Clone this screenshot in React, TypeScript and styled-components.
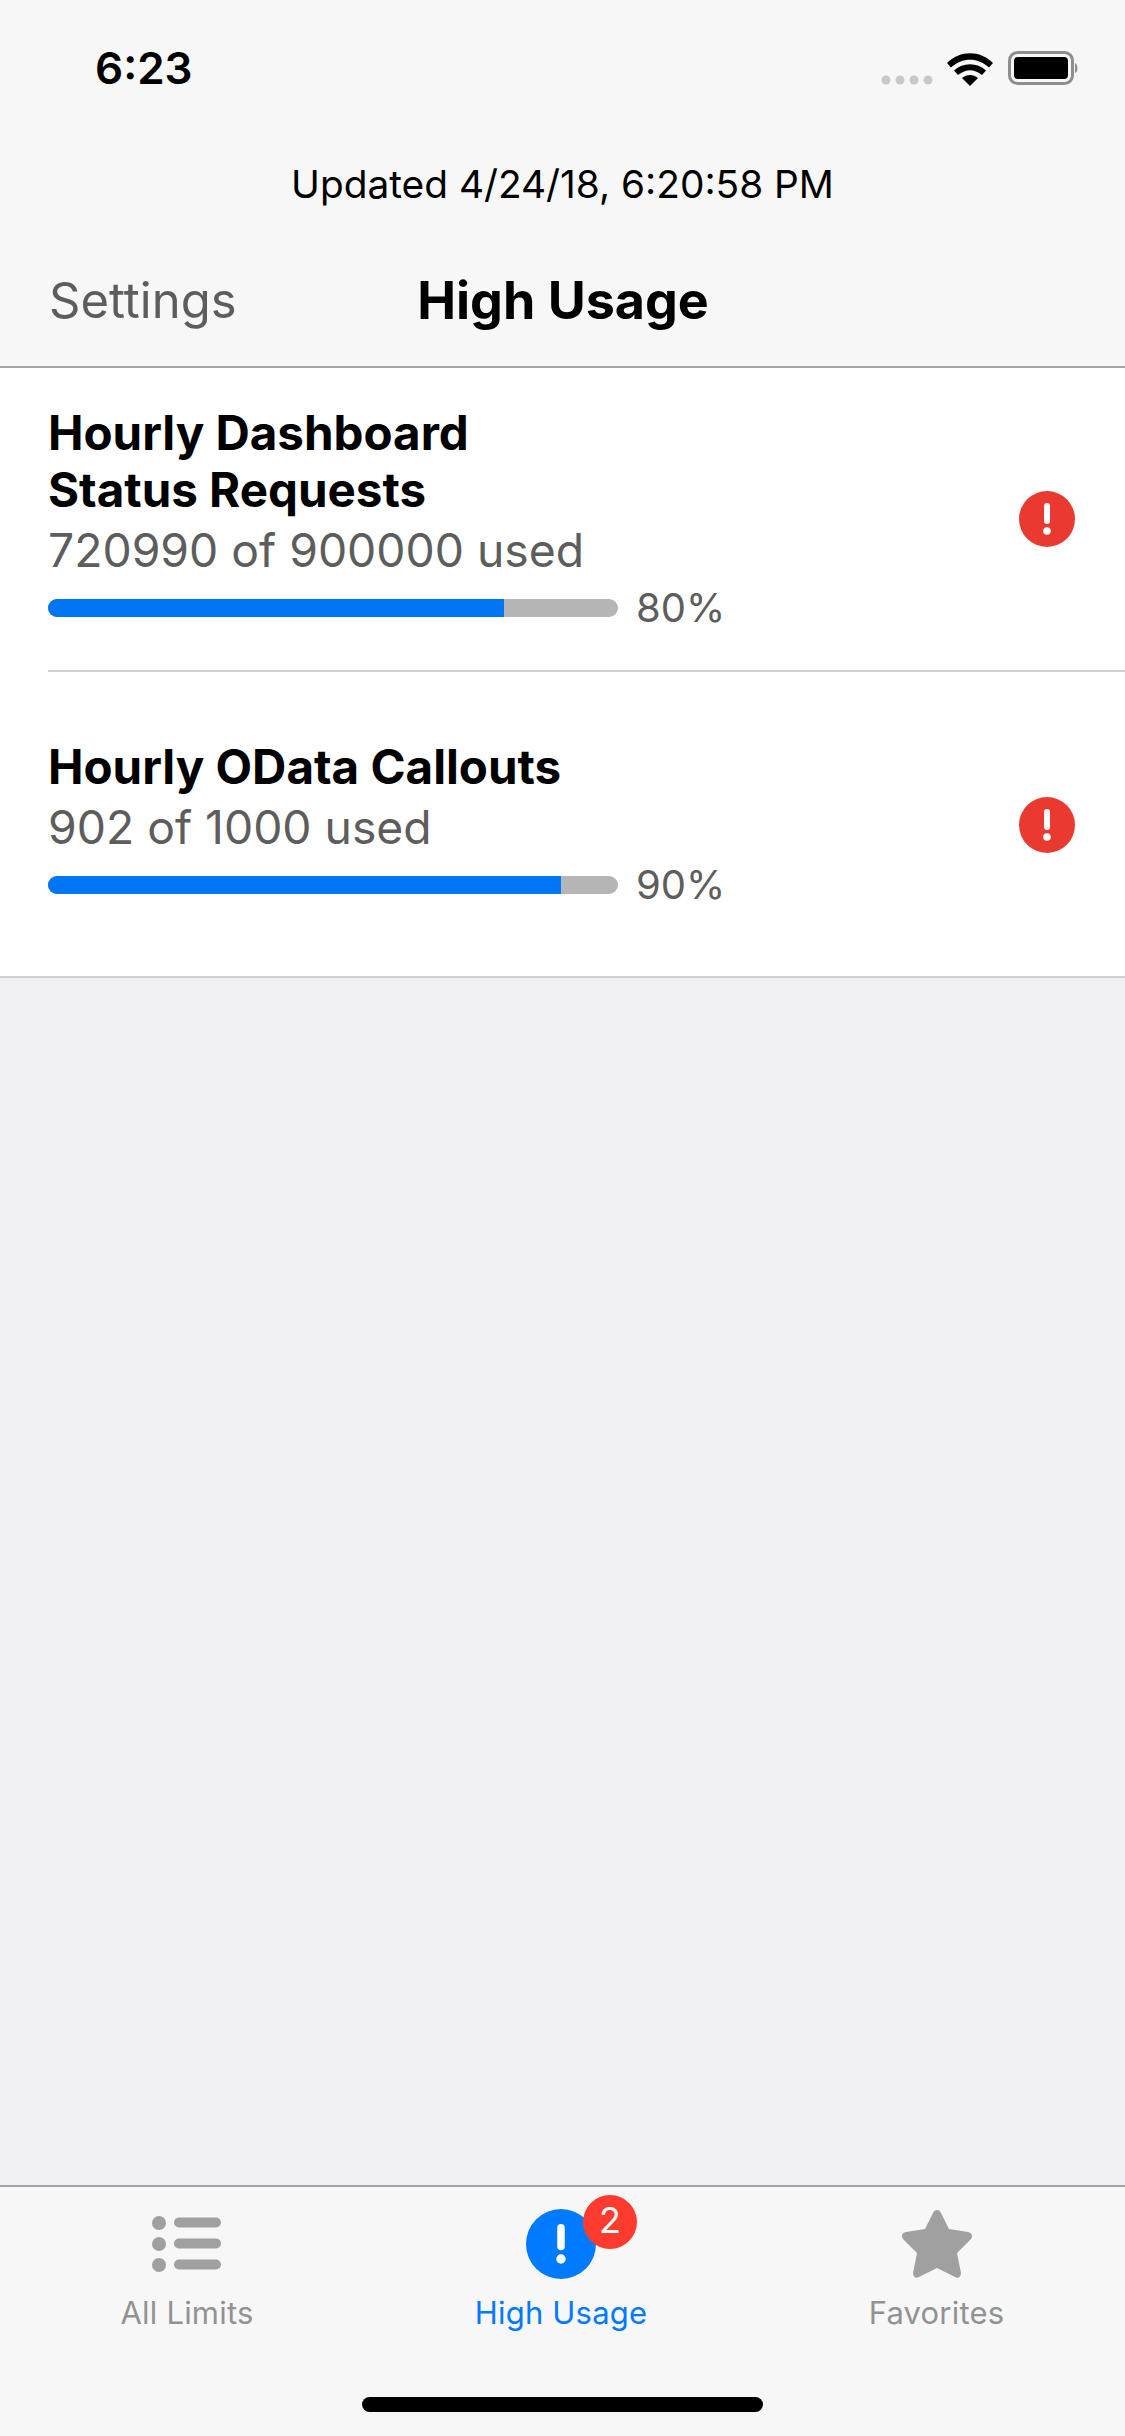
import styled, { createGlobalStyle } from "styled-components"

const GlobalStyle = createGlobalStyle`
    html, body {
        margin: 0;
        padding: 0;
        background: #efeff4;
    }
    * {
        box-sizing: border-box;
    }
`

const Page = styled.div`
    width: 1125px;
    height: 2436px;
    display: flex;
    flex-direction: column;
    font-family: Inter, "Liberation Sans", sans-serif;
    overflow: hidden;
`

const Header = styled.header`
    height: 368px;
    flex: none;
    display: flex;
    flex-direction: column;
    background: #f7f7f7;
    border-bottom: 2px solid #a4a4a6;
`

const StatusBar = styled.div`
    height: 143px;
    padding: 44px 44px 0 95px;
    display: flex;
    justify-content: space-between;
    align-items: flex-start;
`

const Clock = styled.span`
    font-size: 44px;
    line-height: 48px;
    font-weight: 600;
    color: #000;
`

const StatusIcons = styled.div`
    display: flex;
    align-items: flex-start;
    margin-top: 7px;
`

const Updated = styled.div`
    height: 82px;
    text-align: center;
    font-size: 38.800px;
    line-height: 82px;
    color: #000;
    font-weight: 400;
`

const Nav = styled.nav`
    flex: 1;
    display: grid;
    grid-template-columns: 1fr auto 1fr;
    align-items: center;
    padding: 10px 0 0 49px;
`

const BackLink = styled.span`
    font-size: 49px;
    line-height: 56px;
    color: #5d5d5d;
`

const NavTitle = styled.h1`
    margin: 0 24px 0 -24px;
    font-size: 52px;
    line-height: 56px;
    font-weight: 700;
    color: #000;
`

const List = styled.section`
    flex: none;
    background: #fff;
    border-bottom: 2px solid #d0d0d2;
`

const Row = styled.div<{ $height: number; $offset: number }>`
    height: ${props => props.$height}px;
    display: flex;
    align-items: center;
    justify-content: space-between;
    padding: ${props => props.$offset}px 50px 0 48px;
`

const Divider = styled.div`
    height: 2px;
    margin-left: 48px;
    background: #d0d0d2;
`

const RowBody = styled.div`
    display: flex;
    flex-direction: column;
`

const RowTitle = styled.div`
    font-size: 47.500px;
    line-height: 57px;
    font-weight: 700;
    color: #000;
`

const RowUsage = styled.div`
    font-size: 46.300px;
    line-height: 60px;
    margin-top: 2px;
    color: #5d5d5d;
`

const BarRow = styled.div`
    display: flex;
    align-items: center;
    gap: 18px;
    height: 54px;
    margin-top: 1px;
`

const Track = styled.div`
    width: 570px;
    height: 18px;
    border-radius: 9px;
    background: #b5b5b5;
    overflow: hidden;
`

const Fill = styled.div`
    height: 100%;
    background: #0076f5;
`

const Percent = styled.span`
    font-size: 40px;
    line-height: 54px;
    color: #5d5d5d;
`

const Spacer = styled.div`
    flex: 1;
    background: #efeff4;
`

const TabBar = styled.footer`
    height: 251px;
    flex: none;
    background: #f7f7f7;
    border-top: 2px solid #a4a4a6;
    display: flex;
    flex-direction: column;
`

const Tabs = styled.div`
    display: grid;
    grid-template-columns: 374px 374px 377px;
    padding-top: 21px;
`

const Tab = styled.div<{ $active?: boolean }>`
    display: flex;
    flex-direction: column;
    align-items: center;
    color: ${props => props.$active ? "#007aff" : "#929292"};
`

const TabIcon = styled.div`
    position: relative;
    width: 72px;
    height: 72px;
    display: flex;
    align-items: center;
    justify-content: center;
`

const TabLabel = styled.span`
    margin-top: 15px;
    font-size: 31px;
    line-height: 36px;
    letter-spacing: 0.200px;
    font-weight: 400;
`

const Badge = styled.span`
    position: absolute;
    left: 58px;
    top: -13px;
    width: 54px;
    height: 54px;
    border-radius: 50%;
    background: #ff3b30;
    color: #fff;
    font-size: 36px;
    line-height: 50px;
    text-align: center;
`

const HomeIndicator = styled.div`
    width: 401px;
    height: 15px;
    margin: 66px auto 0;
    border-radius: 8px;
    background: #000;
`

const SignalWifiBattery = () => (
    <svg width="200" height="36" viewBox="0 0 200 36">
        <g fill="#c8c8c8">
            <circle cx="5" cy="29" r="4.5" />
            <circle cx="19" cy="29" r="4.5" />
            <circle cx="33" cy="29" r="4.5" />
            <circle cx="47" cy="29" r="4.5" />
        </g>
        <path
            d="M66 12 C79 -1 99 -1 112 12 L108 16.500 C97 6 81 6 70 16.500 Z M73 19.500 C82 11 96 11 105 19.500 L101 24 C93 17.500 85 17.500 77 24 Z M81 27 C86 23 92 23 97 27 L89 35 Z"
            fill="#000"
        />
        <rect x="128.500" y="1.500" width="63" height="31" rx="8" fill="none" stroke="#8e8e8e" strokeWidth="3" />
        <rect x="133" y="6" width="54" height="22" rx="4" fill="#000" />
        <path d="M194 12 C197 13 197.500 21 194 22 Z" fill="#8e8e8e" />
    </svg>
)

const AlertIcon = ({ size, color }: { size: number; color: string }) => (
    <svg width={size} height={size} viewBox="0 0 56 56">
        <circle cx="28" cy="28" r="28" fill={color} />
        <rect x="25" y="12" width="6" height="21" rx="3" fill="#fff" />
        <circle cx="28" cy="40" r="3.800" fill="#fff" />
    </svg>
)

const ListIcon = () => (
    <svg width="70" height="56" viewBox="0 0 70 56" fill="#a0a0a0">
        <circle cx="7" cy="7" r="7" />
        <circle cx="7" cy="28" r="7" />
        <circle cx="7" cy="49" r="7" />
        <rect x="22" y="1.500" width="47" height="10" rx="5" />
        <rect x="22" y="22.500" width="47" height="10" rx="5" />
        <rect x="22" y="43.500" width="47" height="10" rx="5" />
    </svg>
)

const StarIcon = () => (
    <svg width="72" height="70" viewBox="0 0 72 70">
        <path
            d="M36 1 C38 1 39 2 40 4 L48 20 L67 23 C71 24 72 27 70 30 L56 44 L60 64 C60 68 57 70 54 68 L36 59 L18 68 C15 70 12 68 12 64 L16 44 L2 30 C0 27 1 24 5 23 L24 20 L32 4 C33 2 34 1 36 1 Z"
            fill="#a0a0a0"
        />
    </svg>
)

const limits = [
    { title: ["Hourly Dashboard", "Status Requests"], used: "720990 of 900000 used", ratio: 80, height: 302, offset: 0 },
    { title: ["Hourly OData Callouts"], used: "902 of 1000 used", ratio: 90, height: 304, offset: 2 },
]

const App = () => {
    return (
        <Page>
            <GlobalStyle />
            <Header>
                <StatusBar>
                    <Clock>6:23</Clock>
                    <StatusIcons>
                        <SignalWifiBattery />
                    </StatusIcons>
                </StatusBar>
                <Updated>Updated 4/24/18, 6:20:58 PM</Updated>
                <Nav>
                    <BackLink>Settings</BackLink>
                    <NavTitle>High Usage</NavTitle>
                </Nav>
            </Header>
            <List>
                {limits.map((limit, i) => (
                    <div key={limit.used}>
                        {i > 0 && <Divider />}
                        <Row $height={limit.height} $offset={limit.offset}>
                            <RowBody>
                                {limit.title.map(line => <RowTitle key={line}>{line}</RowTitle>)}
                                <RowUsage>{limit.used}</RowUsage>
                                <BarRow>
                                    <Track>
                                        <Fill style={{ width: `${limit.ratio}%` }} />
                                    </Track>
                                    <Percent>{limit.ratio}%</Percent>
                                </BarRow>
                            </RowBody>
                            <AlertIcon size={56} color="#ea3a2f" />
                        </Row>
                    </div>
                ))}
            </List>
            <Spacer />
            <TabBar>
                <Tabs>
                    <Tab>
                        <TabIcon><ListIcon /></TabIcon>
                        <TabLabel>All Limits</TabLabel>
                    </Tab>
                    <Tab $active>
                        <TabIcon>
                            <AlertIcon size={70} color="#007aff" />
                            <Badge>2</Badge>
                        </TabIcon>
                        <TabLabel>High Usage</TabLabel>
                    </Tab>
                    <Tab>
                        <TabIcon><StarIcon /></TabIcon>
                        <TabLabel>Favorites</TabLabel>
                    </Tab>
                </Tabs>
                <HomeIndicator />
            </TabBar>
        </Page>
    )
}

export default App
